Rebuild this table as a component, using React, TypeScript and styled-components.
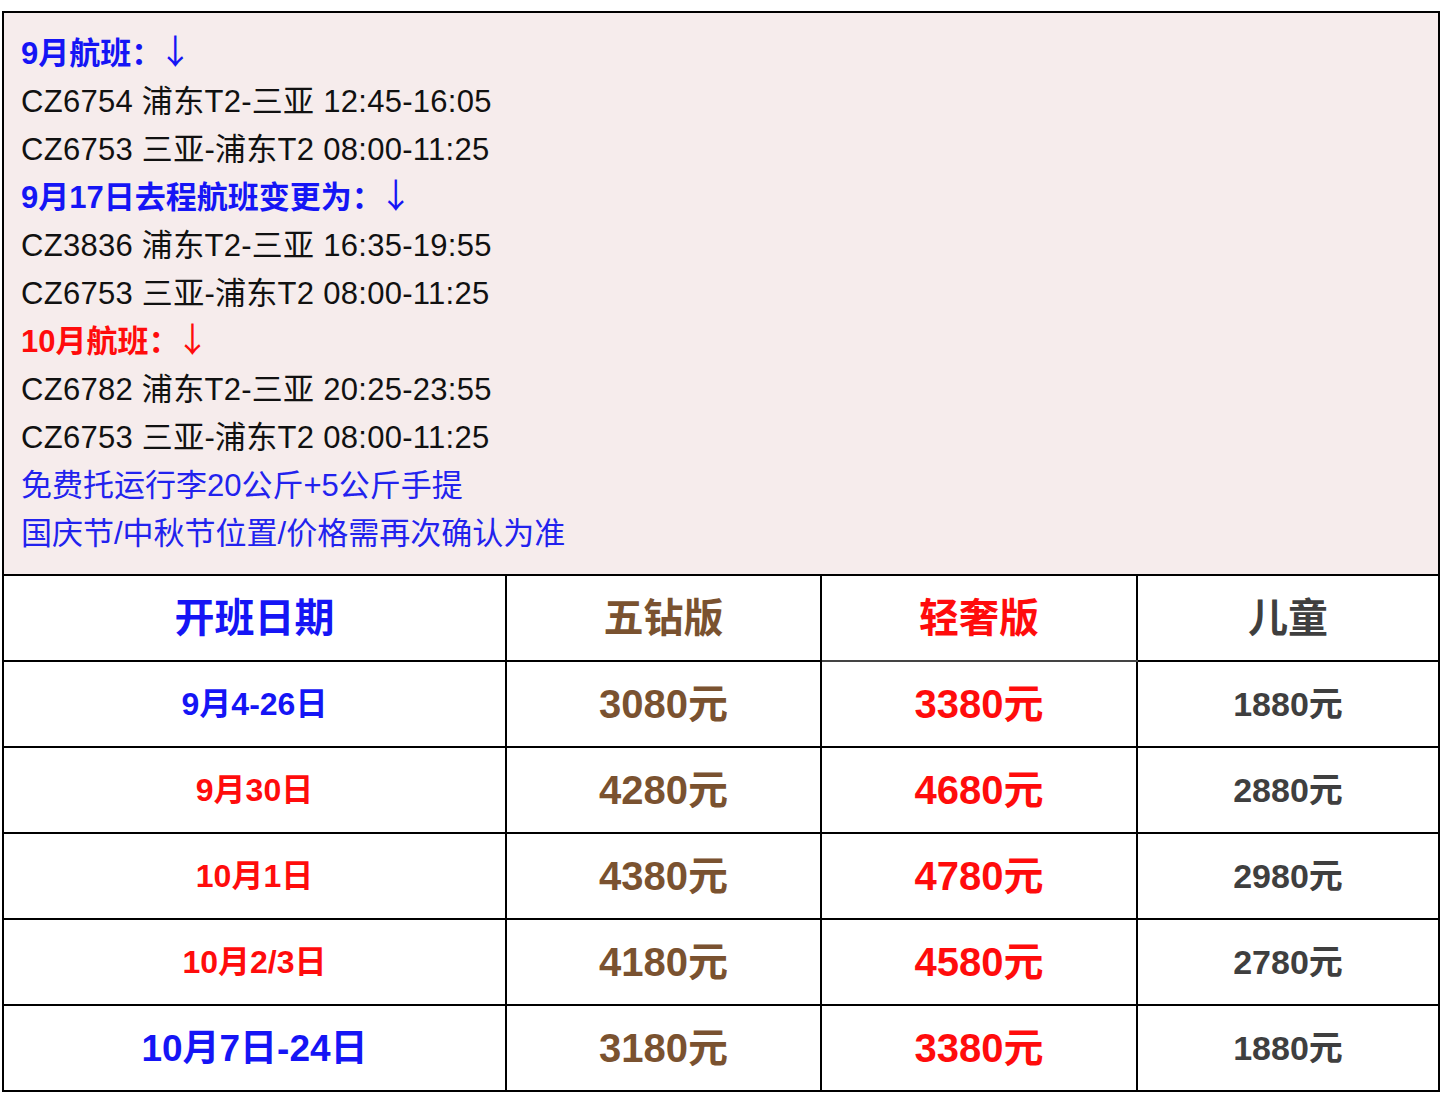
import React from 'react';
import styled, { createGlobalStyle } from 'styled-components';

const GlobalStyle = createGlobalStyle`
  html, body {
    margin: 0;
    padding: 0;
    background: #fff;
  }
  body {
    font-family: "Liberation Sans", "Noto Sans CJK SC", Arial, sans-serif;
  }
`;

const Page = styled.div`
  padding: 11px 4px 0 2px;
`;

const PriceTable = styled.table`
  width: 1436px;
  border-collapse: collapse;
  table-layout: fixed;
  border: 2px solid #000;
`;

const InfoCell = styled.td`
  background: #f6ecec;
  padding: 17px 17px 16px;
  border-bottom: 2px solid #000;
  font-size: 31px;
  line-height: 48px;
  color: #111;
`;

const Line = styled.div<{ $color?: string; $bold?: boolean; $latin?: boolean }>`
  height: 48px;
  color: ${p => p.$color || '#111'};
  font-weight: ${p => (p.$bold ? 700 : 400)};
  letter-spacing: ${p => (p.$latin ? '0.28px' : '0')};
  white-space: nowrap;
`;

const Arrow = styled.span`
  font-family: "Noto Sans CJK SC", sans-serif;
  font-weight: 400;
  font-size: 34px;
  line-height: 1;
  margin-left: -4px;
`;

const HeadCell = styled.th<{ $color: string; $grayBottom?: boolean; $grayLeft?: boolean }>`
  height: 84px;
  padding: 0;
  border: 2px solid #000;
  border-bottom-color: ${p => (p.$grayBottom ? '#444' : '#000')};
  border-left-color: ${p => (p.$grayLeft ? '#444' : '#000')};
  color: ${p => p.$color};
  font-size: 40px;
  line-height: 1;
  font-weight: 700;
  text-align: center;
  vertical-align: middle;
`;

const Cell = styled.td<{ $color: string; $size: number }>`
  height: 84px;
  padding: 0;
  border: 2px solid #000;
  color: ${p => p.$color};
  font-size: ${p => p.$size}px;
  line-height: 1;
  font-weight: 700;
  text-align: center;
  vertical-align: middle;
`;

const BLUE = '#1515f5';
const NOTE_BLUE = '#2222ee';
const RED = '#ff0c0c';
const BROWN = '#7a5230';
const GRAY = '#3f3f3f';

type Row = { date: string; dateColor: string; dateSize: number; five: string; lux: string; kid: string };

const rows: Row[] = [
  { date: '9月4-26日', dateColor: BLUE, dateSize: 32, five: '3080元', lux: '3380元', kid: '1880元' },
  { date: '9月30日', dateColor: RED, dateSize: 32, five: '4280元', lux: '4680元', kid: '2880元' },
  { date: '10月1日', dateColor: RED, dateSize: 32, five: '4380元', lux: '4780元', kid: '2980元' },
  { date: '10月2/3日', dateColor: RED, dateSize: 32, five: '4180元', lux: '4580元', kid: '2780元' },
  { date: '10月7日-24日', dateColor: BLUE, dateSize: 37, five: '3180元', lux: '3380元', kid: '1880元' },
];

export default function App() {
  return (
    <>
      <GlobalStyle />
      <Page>
        <PriceTable>
          <colgroup>
            <col style={{ width: 503 }} />
            <col style={{ width: 315 }} />
            <col style={{ width: 316 }} />
            <col style={{ width: 302 }} />
          </colgroup>
          <tbody>
            <tr>
              <InfoCell colSpan={4}>
                <Line $color={BLUE} $bold>9月航班：<Arrow>↓</Arrow></Line>
                <Line $latin>CZ6754 浦东T2-三亚 12:45-16:05</Line>
                <Line $latin>CZ6753 三亚-浦东T2 08:00-11:25</Line>
                <Line $color={BLUE} $bold>9月17日去程航班变更为：<Arrow>↓</Arrow></Line>
                <Line $latin>CZ3836 浦东T2-三亚 16:35-19:55</Line>
                <Line $latin>CZ6753 三亚-浦东T2 08:00-11:25</Line>
                <Line $color={RED} $bold>10月航班：<Arrow>↓</Arrow></Line>
                <Line $latin>CZ6782 浦东T2-三亚 20:25-23:55</Line>
                <Line $latin>CZ6753 三亚-浦东T2 08:00-11:25</Line>
                <Line $color={NOTE_BLUE}>免费托运行李20公斤+5公斤手提</Line>
                <Line $color={NOTE_BLUE}>国庆节/中秋节位置/价格需再次确认为准</Line>
              </InfoCell>
            </tr>
            <tr>
              <HeadCell $color={BLUE}>开班日期</HeadCell>
              <HeadCell $color={BROWN}>五钻版</HeadCell>
              <HeadCell $color={RED} $grayBottom>轻奢版</HeadCell>
              <HeadCell $color={GRAY} $grayLeft>儿童</HeadCell>
            </tr>
            {rows.map(r => (
              <tr key={r.date}>
                <Cell $color={r.dateColor} $size={r.dateSize}>{r.date}</Cell>
                <Cell $color={BROWN} $size={40}>{r.five}</Cell>
                <Cell $color={RED} $size={40}>{r.lux}</Cell>
                <Cell $color={GRAY} $size={34}>{r.kid}</Cell>
              </tr>
            ))}
          </tbody>
        </PriceTable>
      </Page>
    </>
  );
}
